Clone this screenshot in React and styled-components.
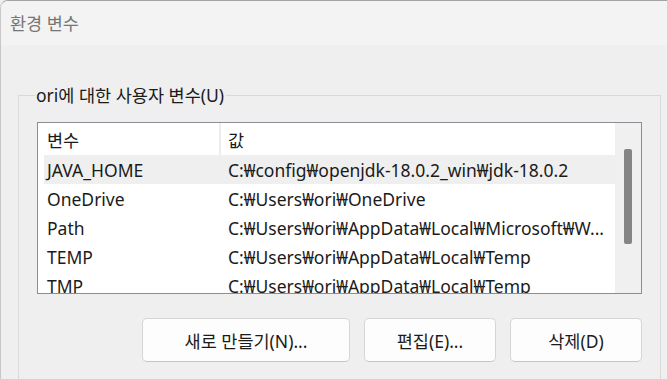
import React from 'react'
import styled, { createGlobalStyle } from 'styled-components'

const GlobalStyle = createGlobalStyle`
  html, body {
    margin: 0;
    padding: 0;
    background: #efefef;
  }
  body {
    font-family: "Noto Sans", "Noto Sans CJK KR", sans-serif;
    font-size: 17.5px;
    color: #1b1b1b;
  }
`

const rows = [
  { name: 'JAVA_HOME', value: 'C:₩config₩openjdk-18.0.2_win₩jdk-18.0.2', selected: true },
  { name: 'OneDrive', value: 'C:₩Users₩ori₩OneDrive' },
  { name: 'Path', value: 'C:₩Users₩ori₩AppData₩Local₩Microsoft₩W...' },
  { name: 'TEMP', value: 'C:₩Users₩ori₩AppData₩Local₩Temp' },
  { name: 'TMP', value: 'C:₩Users₩ori₩AppData₩Local₩Temp' },
]

const App = () => {
  return <>
    <GlobalStyle />
    <Window>
      <TitleBar>환경 변수</TitleBar>
      <Body>
        <Group>
          <GroupTitle>ori에 대한 사용자 변수(U)</GroupTitle>
          <List>
            <Table>
              <Header>
                <Cell $first>변수</Cell>
                <Cell>값</Cell>
              </Header>
              {rows.map((r) => (
                <Row key={r.name} $selected={r.selected}>
                  <Cell $first>{r.name}</Cell>
                  <Cell>{r.value}</Cell>
                </Row>
              ))}
            </Table>
            <Scrollbar>
              <Thumb />
            </Scrollbar>
          </List>
          <Buttons>
            <Button $w={208}>새로 만들기(N)...</Button>
            <Button $w={132}>편집(E)...</Button>
            <Button $w={132}>삭제(D)</Button>
          </Buttons>
        </Group>
      </Body>
    </Window>
  </>
}

const Window = styled.div`
  width: 667px;
  height: 379px;
  overflow: hidden;
  box-sizing: border-box;
  border-top: 1px solid #a3a3a3;
  border-left: 1px solid #c8c8c8;
  border-top-left-radius: 8px;
  background: #efefef;
  display: flex;
  flex-direction: column;
`

const TitleBar = styled.div`
  height: 44px;
  flex-shrink: 0;
  background: #f3f3f3;
  color: #767676;
  font-size: 17.5px;
  padding-left: 9px;
  display: flex;
  align-items: center;
  padding-bottom: 2px;
  box-sizing: border-box;
`

const Body = styled.div`
  padding: 50px 6px 0 17px;
`

const Group = styled.section`
  border: 1px solid #d9d9d9;
  height: 330px;
  box-sizing: border-box;
  padding: 0 18px 0 18px;
  display: flex;
  flex-direction: column;
`

const GroupTitle = styled.div`
  align-self: flex-start;
  height: 24px;
  line-height: 24px;
  margin: -13px 0 0 -2px;
  padding: 0 2px 0 1px;
  background: #efefef;
  color: #1b1b1b;
`

const List = styled.div`
  height: 172px;
  flex-shrink: 0;
  margin-top: 15px;
  box-sizing: border-box;
  border: 1px solid #8a8e96;
  background: #ffffff;
  display: flex;
  overflow: hidden;
`

const Table = styled.div`
  flex: 1;
  min-width: 0;
  display: flex;
  flex-direction: column;
`

const Header = styled.div`
  height: 32px;
  flex-shrink: 0;
  display: grid;
  grid-template-columns: 181px 1fr;
  align-items: center;

  & > div + div {
    border-left: 2px solid #ececec;
    align-self: stretch;
    display: flex;
    align-items: center;
  }
`

const Row = styled.div`
  height: 29px;
  flex-shrink: 0;
  display: grid;
  grid-template-columns: 175px 1fr;
  margin-left: 6px;
  align-items: center;
  background: ${(p) => (p.$selected ? '#efefef' : 'transparent')};

  & > div + div {
    padding-left: 9px;
  }
`

const Cell = styled.div`
  padding-left: ${(p) => (p.$first ? '3px' : '8px')};
  white-space: nowrap;
  overflow: hidden;
  text-overflow: ellipsis;
  ${Header} & {
    padding-left: ${(p) => (p.$first ? '9px' : '7px')};
  }
`

const Scrollbar = styled.div`
  width: 26px;
  flex-shrink: 0;
  background: #f0f0f0;
  position: relative;
`

const Thumb = styled.div`
  position: absolute;
  left: 9px;
  top: 26px;
  width: 8px;
  height: 95px;
  border-radius: 2px;
  background: #858585;
`

const Buttons = styled.div`
  display: flex;
  justify-content: flex-end;
  gap: 14px;
  margin-top: 24px;
`

const Button = styled.button`
  width: ${(p) => p.$w}px;
  height: 44px;
  box-sizing: border-box;
  border: 1px solid #d6d6d6;
  border-bottom-color: #c4c4c4;
  border-radius: 5px;
  background: #fdfdfd;
  font-family: inherit;
  font-size: 17.5px;
  color: #1b1b1b;
  padding: 0;
`

export default App
